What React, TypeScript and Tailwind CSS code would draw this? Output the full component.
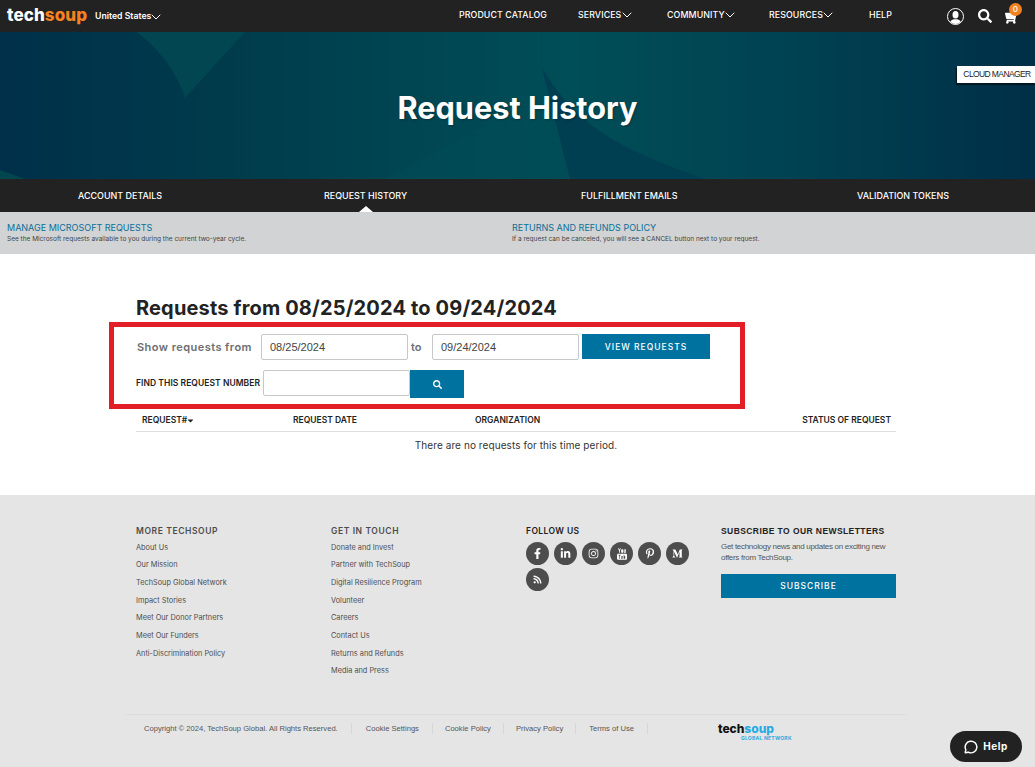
import React from "react";
import { ChevronDown, MessageCircle } from "lucide-react";
import { FaFacebookF, FaLinkedinIn, FaInstagram, FaPinterestP, FaMediumM, FaRss, FaSearch, FaShoppingCart, FaCaretDown } from "react-icons/fa";

const Inter = "font-['Inter','Liberation_Sans',sans-serif]";

function Chev({ className = "" }: { className?: string }) {
  return <ChevronDown className={"w-[16px] h-[16px] -mx-[4px] shrink-0 " + className} strokeWidth={1.5} />;
}

function YouTubeOld() {
  return (
    <svg viewBox="0 0 12 14" className="w-[10px] h-[12px]" fill="#fff">
      <path d="M1.200 0h1l.7 2 .7-2h1L3.400 3v2.600h-1V3zM6.300 1.200c.8 0 1.300.5 1.300 1.300v1.900c0 .8-.5 1.300-1.300 1.300S5 5.200 5 4.400V2.500c0-.8.500-1.300 1.300-1.300zM8.300 1.300h.9v3.400c0 .3.300.3.6 0V1.300h.9v4.300h-.9v-.4c-.7.7-1.500.6-1.500-.4z" />
      <path fillRule="evenodd" d="M1.500 6.800h9c.8 0 1.500.7 1.500 1.500v4.200c0 .8-.7 1.500-1.500 1.500h-9C.7 14 0 13.300 0 12.500V8.300c0-.8.7-1.500 1.500-1.500zM2 8v.7h.8v4h.8v-4h.8V8zm3 1.300v3.400h.7v-.3c.5.500 1.100.3 1.100-.4V9.300H6v2.500c-.1.200-.3.200-.3 0V9.300zM8 8v4.700h.7v-.3c.5.500 1.200.3 1.200-.4v-1.900c0-.7-.7-.9-1.200-.4V8z" />
    </svg>
  );
}

function Header() {
  return (
    <header className="h-8 bg-[#222222] flex items-center text-white">
      <div className="ml-[7px] w-[88px] text-[17px] leading-none font-extrabold tracking-[0.1px] font-['Inter',sans-serif] -mt-[1px]">
        tech<span className="text-[#f58220]">soup</span>
      </div>
      <div className="w-[64px] flex items-center whitespace-nowrap text-[8.700px] font-semibold font-['Inter',sans-serif] mt-[1px]">
        United States<Chev className="ml-[-3px]" />
      </div>
      <nav className="ml-[300px] flex items-center text-[8.800px] font-medium font-['Inter',sans-serif] tracking-[0.1px] -mt-[2px]">
        <span className="w-[119px]">PRODUCT CATALOG</span>
        <span className="w-[89px] flex items-center">SERVICES<Chev className="ml-[-2px]" /></span>
        <span className="w-[102px] flex items-center">COMMUNITY<Chev className="ml-[-3px]" /></span>
        <span className="w-[100px] flex items-center">RESOURCES<Chev className="ml-[-3px]" /></span>
        <span>HELP</span>
      </nav>
      <div className="ml-[55px] relative w-[17px] h-[17px] rounded-full border border-white bg-[#222222] overflow-hidden">
        <svg viewBox="0 0 16 16" className="w-full h-full" fill="#fff">
          <ellipse cx="8" cy="6" rx="3.200" ry="4" />
          <path d="M1.500 16c.5-3.500 3-4.800 4.500-5.200h4c1.500.4 4 1.700 4.500 5.200z" />
        </svg>
      </div>
      <FaSearch className="ml-[14px] w-[14px] h-[14px]" />
      <div className="ml-[13px] relative mt-[3px]">
        <FaShoppingCart className="w-[14px] h-[13px] -scale-x-100" />
        <span className="absolute -top-[8px] left-[4px] w-[13px] h-[13px] rounded-full bg-[#f58220] text-[8px] leading-[13px] text-center text-white font-['Inter',sans-serif] font-medium">0</span>
      </div>
    </header>
  );
}

function Hero() {
  return (
    <section className="relative h-[147px] overflow-hidden flex items-center justify-center bg-[#003b4d]">
      <svg className="absolute inset-0 w-full h-full" viewBox="0 0 1035 147" preserveAspectRatio="none">
        <defs>
          <linearGradient id="hg" x1="0" x2="1" y1="0" y2="0">
            <stop offset="0" stopColor="#00304a" />
            <stop offset="0.2" stopColor="#003a4b" />
            <stop offset="0.4" stopColor="#004652" />
            <stop offset="0.55" stopColor="#004e57" />
            <stop offset="0.75" stopColor="#004352" />
            <stop offset="1" stopColor="#002f47" />
          </linearGradient>
          <linearGradient id="lt" x1="0" x2="1" y1="0" y2="0">
            <stop offset="0" stopColor="#004854" />
            <stop offset="1" stopColor="#004d57" />
          </linearGradient>
        </defs>
        <rect width="1035" height="147" fill="url(#hg)" />
        <path d="M137 0H245L185 66C178 42 160 18 137 0Z" fill="#014650" />
        <path d="M0 138V147H25Z" fill="#00464f" />
        <path d="M385 147C450 110 510 90 542 36L570 147Z" fill="url(#lt)" />
        <path d="M542 36C580 100 630 120 705 147H570Z" fill="#003e52" />
      </svg>
      <h1 className="relative text-[30.700px] leading-none font-bold text-white font-['Inter',sans-serif] [text-shadow:1px_1px_2px_rgba(0,0,0,0.3)] mt-[5px]">Request History</h1>
      <div className="absolute right-0 top-[34px] w-[78px] h-[17px] bg-white text-[#222] text-[8.500px] tracking-[-0.6px] leading-[17px] pl-[2px] text-center font-['Liberation_Sans',sans-serif] shadow-[-1px_2px_1px_rgba(0,0,0,0.5)]">CLOUD MANAGER</div>
    </section>
  );
}

function Tabs() {
  return (
    <div className="relative h-[33px] bg-[#222222] flex items-center text-white text-[8.950px] font-medium font-['Inter',sans-serif] pl-[78px]">
      <span className="w-[246px]">ACCOUNT DETAILS</span>
      <span className="w-[257px]">REQUEST HISTORY</span>
      <span className="w-[276px]">FULFILLMENT EMAILS</span>
      <span>VALIDATION TOKENS</span>
      <span className="absolute left-[359px] bottom-0 w-0 h-0 border-x-[7px] border-x-transparent border-b-[6px] border-b-white" />
    </div>
  );
}

function Info() {
  return (
    <div className="h-[42px] bg-[#d1d3d4] grid grid-cols-[505px_1fr] pl-[7px] pt-[10px] font-['Inter',sans-serif]">
      <div>
        <div className="text-[9px] leading-[12px] text-[#0a6f98]">MANAGE MICROSOFT REQUESTS</div>
        <div className="text-[6.500px] leading-[9px] text-[#444] mt-[1px]">See the Microsoft requests available to you during the current two-year cycle.</div>
      </div>
      <div>
        <div className="text-[9px] leading-[12px] text-[#0a6f98]">RETURNS AND REFUNDS POLICY</div>
        <div className="text-[6.500px] leading-[9px] text-[#444] mt-[1px]">If a request can be canceled, you will see a CANCEL button next to your request.</div>
      </div>
    </div>
  );
}

function Main() {
  const field = "h-[26px] w-[147px] rounded-[2px] border border-[#c8c8c8] bg-white text-[11px] text-[#444] font-['Liberation_Sans',sans-serif] px-2 flex items-center";
  return (
    <main className="h-[241px] bg-white pl-[136px] w-full">
      <h2 className="pt-[41px] text-[20px] leading-[26px] font-bold text-[#222] tracking-[0.16px] font-['Inter',sans-serif]">Requests from 08/25/2024 to 09/24/2024</h2>
      <div className="-ml-[27px] mt-[1px] w-[636px] h-[87px] border-[5px] border-[#e21f26] pl-[22px] pt-[7px]">
        <div className="flex items-center h-[26px]">
          <span className="w-[125px] pl-[1px] text-[11px] font-semibold text-[#6d6e71] tracking-[0.45px] whitespace-nowrap font-['Inter',sans-serif]">Show requests from</span>
          <div className={field}>08/25/2024</div>
          <span className="w-[24px] pl-[3px] text-[11px] font-semibold text-[#6d6e71] font-['Inter',sans-serif]">to</span>
          <div className={field}>09/24/2024</div>
          <div className="ml-[3px] self-start h-[25px] w-[128px] pt-[2px] bg-[#00729f] text-white text-[8.500px] font-medium tracking-[1px] flex items-center justify-center font-['Inter',sans-serif]">VIEW REQUESTS</div>
        </div>
        <div className="flex items-start mt-[10px]">
          <span className="w-[127px] h-[26px] flex items-center text-[8.500px] font-semibold text-[#222] tracking-[0.05px] whitespace-nowrap font-['Inter',sans-serif]">FIND THIS REQUEST NUMBER</span>
          <div className="h-[26px] w-[147px] rounded-[2px] border border-[#c8c8c8] bg-white" />
          <div className="h-[28px] w-[54px] bg-[#00729f] text-white flex items-center justify-center">
            <FaSearch className="w-[9px] h-[9px]" />
          </div>
        </div>
      </div>
      <div className="w-[760px] h-[23px] border-b border-[#dedede] flex items-center text-[8.500px] font-semibold text-[#222] font-['Inter',sans-serif] pl-[6px]">
        <span className="w-[151px] flex items-center">REQUEST#<FaCaretDown className="w-[9px] h-[9px] -ml-[1px]" /></span>
        <span className="w-[182px]">REQUEST DATE</span>
        <span className="flex-1">ORGANIZATION</span>
        <span className="pr-[5px]">STATUS OF REQUEST</span>
      </div>
      <p className="w-[760px] text-center mt-[7px] text-[10px] leading-[13px] text-[#333] tracking-[0.08px] font-['Inter',sans-serif]">There are no requests for this time period.</p>
    </main>
  );
}

const col1 = ["About Us", "Our Mission", "TechSoup Global Network", "Impact Stories", "Meet Our Donor Partners", "Meet Our Funders", "Anti-Discrimination Policy"];
const col2 = ["Donate and Invest", "Partner with TechSoup", "Digital Resilience Program", "Volunteer", "Careers", "Contact Us", "Returns and Refunds", "Media and Press"];

function LinkCol({ title, links }: { title: string; links: string[] }) {
  return (
    <div className="w-[195px] font-['Inter',sans-serif]">
      <div className="text-[8.500px] leading-[12px] font-semibold text-[#4d4d4d] tracking-[0.6px]">{title}</div>
      <ul className="mt-[1.500px]">
        {links.map((l) => (
          <li key={l} className="h-[17.700px] text-[7.350px] leading-[17.700px] text-[#4d4d4d]">{l}</li>
        ))}
      </ul>
    </div>
  );
}

function Social({ children }: { children: React.ReactNode }) {
  return <span className="w-[23px] h-[23px] rounded-full bg-[#4d4d4d] text-white flex items-center justify-center">{children}</span>;
}

function Footer() {
  return (
    <footer className="relative h-[272px] bg-[#e5e5e5]">
      <div className="flex pl-[136px] pt-[30px] h-[219px]">
        <LinkCol title="MORE TECHSOUP" links={col1} />
        <LinkCol title="GET IN TOUCH" links={col2} />
        <div className="w-[195px] font-['Inter',sans-serif]">
          <div className="text-[8.500px] leading-[12px] font-semibold text-[#222] tracking-[0.4px]">FOLLOW US</div>
          <div className="mt-[5px] flex flex-wrap gap-x-[5px] gap-y-[3px] w-[170px]">
            <Social><FaFacebookF className="w-[11px] h-[11px]" /></Social>
            <Social><FaLinkedinIn className="w-[11px] h-[11px]" /></Social>
            <Social><FaInstagram className="w-[11px] h-[11px]" /></Social>
            <Social><YouTubeOld /></Social>
            <Social><FaPinterestP className="w-[10px] h-[11px]" /></Social>
            <Social><FaMediumM className="w-[11px] h-[11px]" /></Social>
            <Social><FaRss className="w-[9px] h-[9px]" /></Social>
          </div>
        </div>
        <div className="w-[175px]">
          <div className="text-[8.500px] leading-[12px] font-semibold text-[#222] tracking-[0.42px] whitespace-nowrap font-['Liberation_Sans',sans-serif]">SUBSCRIBE TO OUR NEWSLETTERS</div>
          <p className="mt-[5px] text-[8px] leading-[10.500px] tracking-[-0.3px] text-[#555] w-[170px] font-['Liberation_Sans',sans-serif]">Get technology news and updates on exciting new offers from TechSoup.</p>
          <div className="mt-[11px] h-[24px] bg-[#00729f] text-white text-[8.500px] font-medium tracking-[1px] flex items-center justify-center font-['Inter',sans-serif]">SUBSCRIBE</div>
        </div>
      </div>
      <div className="ml-[126px] w-[780px] border-t border-[#dcdcdc] pt-[8px] pl-[18px] flex items-start">
        <div className="flex text-[7.600px] leading-[11px] text-[#555] font-['Liberation_Sans',sans-serif]">
          <span className="pr-[13px] border-r border-[#d8d8d8]">Copyright © 2024, TechSoup Global. All Rights Reserved.</span>
          <span className="pl-[14px] pr-[13px] border-r border-[#d8d8d8]">Cookie Settings</span>
          <span className="pl-[12px] pr-[12px] border-r border-[#d8d8d8]">Cookie Policy</span>
          <span className="pl-[12px] pr-[12px] border-r border-[#d8d8d8]">Privacy Policy</span>
          <span className="px-[13px] border-r border-[#d8d8d8]">Terms of Use</span>
        </div>
        <div className="ml-[70px] font-['Inter',sans-serif] w-[76px]">
          <div className="text-[12px] leading-[12px] font-extrabold text-[#111]">tech<span className="text-[#29abe2]">soup</span></div>
          <div className="text-[5px] leading-[7px] font-bold text-[#29abe2] tracking-[0.25px] pl-[23px] whitespace-nowrap">GLOBAL NETWORK</div>
        </div>
      </div>
      <div className="absolute left-[950px] top-[236px] w-[72px] h-[31px] rounded-full bg-[#222222] text-white flex items-center justify-center gap-[5px] text-[10px] font-bold tracking-[0.5px] font-['Inter',sans-serif]">
        <MessageCircle className="w-[14px] h-[14px]" strokeWidth={2.5} />Help
      </div>
    </footer>
  );
}

export default function App() {
  return (
    <div className={"w-full min-h-screen bg-white overflow-hidden " + Inter}>
      <Header />
      <Hero />
      <Tabs />
      <Info />
      <Main />
      <Footer />
    </div>
  );
}
